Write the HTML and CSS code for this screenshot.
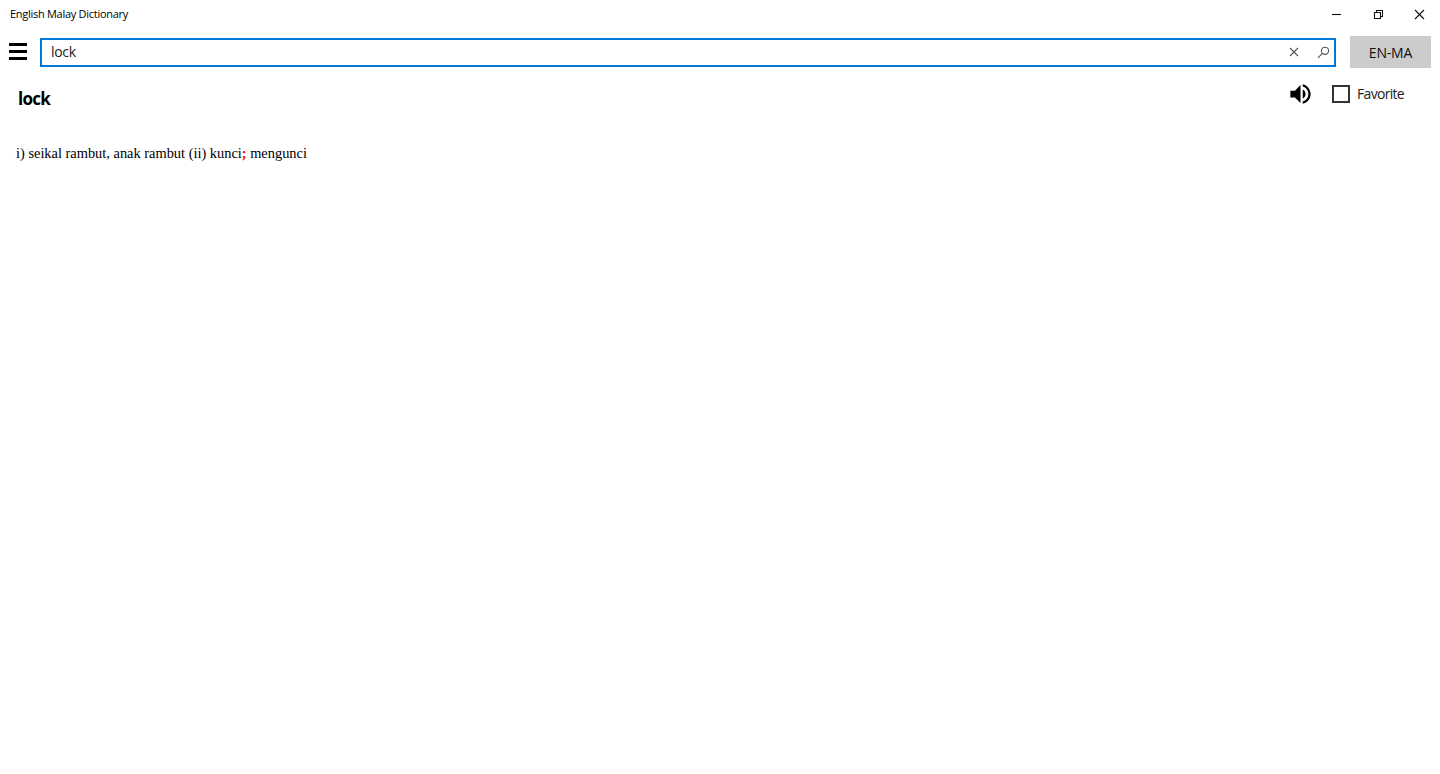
FILE: index.html
```html
<!DOCTYPE html>
<html lang="en">
<head>
    <meta charset="UTF-8">
    <meta name="viewport" content="width=device-width, initial-scale=1.0">
    <title>English Malay Dictionary</title>
    <link rel="stylesheet" href="styles.css">
</head>
<body>
    <header class="title-bar">
        <span class="app-name">English Malay Dictionary</span>
        <div class="window-buttons">
            <svg viewBox="0 0 11 11"><path d="M1 5.5h9"/></svg>
            <svg viewBox="0 0 11 11"><path d="M1.5 3.5h6v6h-6zM3.5 3.5v-2h6v6h-2"/></svg>
            <svg viewBox="0 0 11 11"><path d="M1 1l9 9M10 1l-9 9"/></svg>
        </div>
    </header>

    <div class="toolbar">
        <button class="menu-btn" aria-label="Menu">
            <span></span>
            <span></span>
            <span></span>
        </button>
        <div class="search-box">
            <input type="text" value="lock" id="searchInput">
            <svg class="clear-icon" viewBox="0 0 10 10"><path d="M1 1l8 8M9 1l-8 8"/></svg>
            <svg class="search-icon" viewBox="0 0 13 13"><circle cx="8" cy="4.8" r="3.6"/><path d="M5.4 7.4L1 11.8"/></svg>
        </div>
        <button class="lang-btn">EN-MA</button>
    </div>

    <main>
        <div class="word-row">
            <h1 class="word">lock</h1>
            <div class="actions">
                <svg class="speaker" viewBox="0 0 24 24"><path d="M3 9v6h4l5 5V4L7 9H3zm13.5 3c0-1.77-1.02-3.29-2.5-4.03v8.05c1.48-.73 2.5-2.25 2.5-4.02zM14 3.23v2.06c2.89.86 5 3.54 5 6.71s-2.11 5.85-5 6.71v2.06c4.01-.91 7-4.49 7-8.77s-2.99-7.86-7-8.77z"/></svg>
                <label class="favorite">
                    <input type="checkbox">
                    <span>Favorite</span>
                </label>
            </div>
        </div>
        <p class="meaning">i) seikal rambut, anak rambut (ii) kunci<b>;</b> mengunci</p>
    </main>
</body>
</html>
```

FILE: styles.css
```css
* {
    margin: 0;
    padding: 0;
    box-sizing: border-box;
}

body {
    background: #fff;
    color: #000;
    font-family: 'Open Sans', 'Noto Sans', sans-serif;
    min-height: 100vh;
}

button {
    border: 0;
    font-family: inherit;
}

.title-bar {
    display: flex;
    justify-content: space-between;
    height: 29px;
    padding: 0 15px 0 10px;
}

.app-name {
    font-size: 11px;
    line-height: 27px;
    letter-spacing: -0.28px;
}

.window-buttons {
    display: flex;
    align-items: center;
    gap: 30px;
}

.window-buttons svg {
    width: 11px;
    height: 11px;
    fill: none;
    stroke: #111;
    stroke-width: 1.1;
}

.window-buttons svg:first-child {
    margin-right: 1px;
}

.toolbar {
    display: flex;
    align-items: center;
    height: 46px;
    padding: 0 9px;
}

.menu-btn {
    display: flex;
    flex-direction: column;
    gap: 4px;
    width: 18px;
    margin: 0 13px 2px 0;
    background: none;
}

.menu-btn span {
    height: 3px;
    background: #000;
}

.search-box {
    flex: 1;
    display: flex;
    align-items: center;
    height: 29px;
    margin-right: 14px;
    padding: 0 4px 0 9px;
    border: 2px solid #0078d7;
}

.search-box input {
    flex: 1;
    padding-bottom: 1px;
    border: 0;
    outline: 0;
    background: none;
    color: #222;
    font-family: inherit;
    font-size: 14px;
    letter-spacing: -0.3px;
}

.search-box svg {
    fill: none;
    stroke: #555;
    stroke-width: 1.1;
}

.clear-icon {
    width: 10px;
    height: 10px;
    margin-right: 18px;
}

.search-icon {
    width: 13px;
    height: 13px;
}

.lang-btn {
    width: 81px;
    height: 32px;
    background: #ccc;
    color: #111;
    font-size: 14px;
    letter-spacing: -0.2px;
}

.word-row {
    display: flex;
    justify-content: space-between;
    padding: 0 36px 0 18px;
}

.word {
    margin-top: 12px;
    font-size: 17px;
    line-height: 24px;
    letter-spacing: -0.7px;
}

.actions {
    display: flex;
    align-items: center;
    height: 37px;
}

.speaker {
    width: 27px;
    height: 28px;
    margin: 1px 18px 0 0;
}

.favorite {
    display: flex;
    align-items: center;
    gap: 7px;
    color: #222;
    font-size: 14px;
    letter-spacing: -0.7px;
}

.favorite input {
    appearance: none;
    width: 18px;
    height: 18px;
    border: 2px solid #333;
}

.meaning {
    margin: 31px 16px 0;
    font-family: 'Liberation Serif', 'Times New Roman', serif;
    font-size: 14.4px;
    line-height: 18px;
}

.word-row {
    height: 38px;
}

.meaning b {
    color: #f00;
}
```
